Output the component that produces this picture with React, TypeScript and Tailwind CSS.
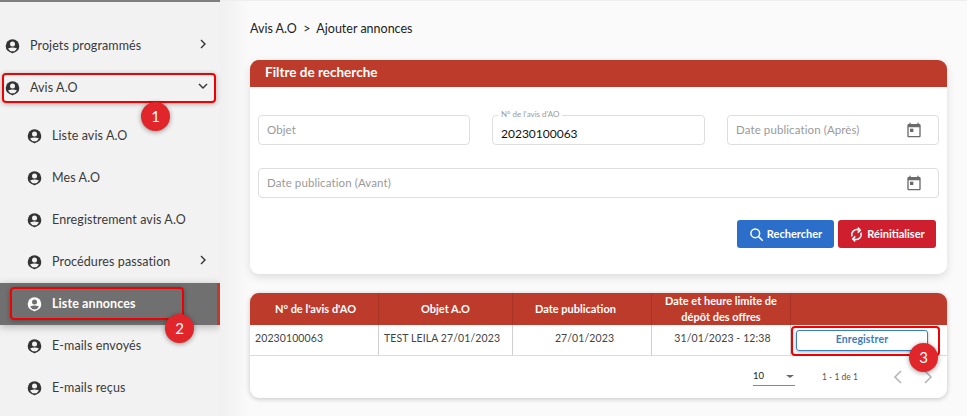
import React from "react";

const font = { fontFamily: '"Lato", "Liberation Sans", sans-serif' };

function UserIcon({ light }: { light?: boolean }) {
  const c = light ? "#ffffff" : "#333333";
  const bg = light ? "#707070" : "#f2f2f2";
  return (
    <svg width="15" height="15" viewBox="0 0 15 15" className="shrink-0">
      <circle cx="7.5" cy="7" r="6.8" fill={c} />
      <circle cx="7.5" cy="5" r="2.5" fill={bg} />
      <path d="M3 9.6 Q7.5 7.6 12 9.6 L9.8 12 Q7.5 13.4 5.2 12 Z" fill={bg} />
      <path d="M5 12.6 L7.5 14.6 L10 12.6 Z" fill={c} />
    </svg>
  );
}

function Chevron({ down }: { down?: boolean }) {
  return (
    <svg width="10" height="10" viewBox="0 0 10 10" fill="none" stroke="#333" strokeWidth="1.4" className="mb-[5px] shrink-0">
      {down ? <path d="M1 3 L5 7 L9 3" /> : <path d="M3 1 L7 5 L3 9" />}
    </svg>
  );
}

function MenuRow({ label, indent, chevron, down, active, mt }: { label: string; indent?: boolean; chevron?: boolean; down?: boolean; active?: boolean; mt?: boolean }) {
  return (
    <div
      className={`flex h-[42px] items-center pr-[12px] ${indent ? "pl-[27px]" : "pl-[5px]"} ${mt ? "mt-[6px]" : ""} ${
        active ? "border-r-[3px] border-[#c0392b] bg-[#707070] font-bold text-white shadow-[0_2px_8px_rgba(0,0,0,0.25)]" : "text-[#3a3a3a]"
      }`}
    >
      <UserIcon light={active} />
      <span className="ml-[10px] flex-1 pt-[1px] text-[12.5px] tracking-[0.1px]">{label}</span>
      {chevron && <Chevron down={down} />}
    </div>
  );
}

function Calendar() {
  return (
    <svg width="16" height="16" viewBox="0 0 24 24" fill="#6b6b6b" className="shrink-0">
      <path d="M20 3h-1V1h-2v2H7V1H5v2H4c-1.1 0-2 .9-2 2v16c0 1.1.9 2 2 2h16c1.1 0 2-.9 2-2V5c0-1.1-.9-2-2-2zm0 18H4V8h16v13z" />
      <rect x="6" y="10" width="5" height="5" />
    </svg>
  );
}

function Field({ label, className, icon, children }: { label?: string; className: string; icon?: boolean; children?: React.ReactNode }) {
  return (
    <div className={`flex h-[30px] items-center justify-between rounded-[4px] border border-[#dedede] bg-white pl-[8px] pr-[16px] text-[11.5px] tracking-[0.1px] text-[#9a9a9a] ${className}`}>
      {label && <span className="pb-[1px]">{label}</span>}
      {children}
      {icon && <Calendar />}
    </div>
  );
}

function Badge({ n, className }: { n: number; className: string }) {
  return (
    <div className={`absolute flex h-[29px] w-[29px] items-center justify-center rounded-full bg-[#e0252b] text-[15px] text-white shadow-[0_1px_5px_rgba(0,0,0,0.4)] ${className}`}>
      {n}
    </div>
  );
}

const cols = "grid grid-cols-[129px_134px_139px_139px_156px]";

export default function App() {
  return (
    <div className="relative flex h-[416px] w-[967px] overflow-hidden bg-[#fafafa]" style={font}>
      <aside className="w-[220px] shrink-0 border-t-2 border-[#7f7f7f] bg-[#f2f2f2] pt-[23px]">
        <MenuRow label="Projets programmés" chevron />
        <MenuRow label="Avis A.O" chevron down />
        <MenuRow label="Liste avis A.O" indent mt />
        <MenuRow label="Mes A.O" indent />
        <MenuRow label="Enregistrement avis A.O" indent />
        <MenuRow label="Procédures passation" indent chevron />
        <MenuRow label="Liste annonces" indent active />
        <MenuRow label="E-mails envoyés" indent />
        <MenuRow label="E-mails reçus" indent />
      </aside>

      <main className="flex-1 border-t border-[#eeeeee] bg-gradient-to-r from-[#f0f0f0] to-[#fafafa] to-[4%] pl-[30px] pr-[20px]">
        <div className="flex h-[59px] items-center pb-[3px] text-[12.5px] text-[#222]">
          Avis A.O&nbsp;&nbsp;&gt;&nbsp;&nbsp;Ajouter annonces
        </div>

        <section className="h-[214px] rounded-[9px] bg-white shadow-[0_3px_8px_rgba(0,0,0,0.12)]">
          <div className="flex h-[27px] items-center rounded-t-[9px] bg-[#bd3b2b] pb-[2px] pl-[15px] text-[13.5px] font-bold text-white">
            Filtre de recherche
          </div>
          <div className="px-[8px] pt-[28px]">
            <div className="flex gap-[22px]">
              <Field label="Objet" className="w-[212px]" />
              <div className="relative w-[213px]">
                <Field className="w-full">
                  <span className="pt-[7px] text-[12px] tracking-normal text-[#111]">20230100063</span>
                </Field>
                <span className="absolute left-[6px] top-[-6px] bg-white px-[3px] text-[8px] leading-[10px] text-[#9a9a9a]">N° de l'avis d'AO</span>
              </div>
              <Field label="Date publication (Après)" icon className="w-[212px]" />
            </div>
            <Field label="Date publication (Avant)" icon className="mt-[23px] w-[681px]" />
            <div className="mt-[22px] flex justify-end gap-[4px] pr-[3px]">
              <button className="flex h-[28px] w-[97px] items-center justify-center gap-[3px] rounded-[3px] bg-[#2b6fcb] text-[11px] font-bold text-white">
                <svg width="15" height="15" viewBox="0 0 24 24" fill="none" stroke="white" strokeWidth="2.4"><circle cx="10" cy="10" r="7" /><path d="M15 15 L22 22" /></svg>
                Rechercher
              </button>
              <button className="flex h-[28px] w-[98px] items-center justify-center gap-[3px] rounded-[3px] bg-[#cf1f2e] text-[11px] font-bold text-white">
                <svg width="15" height="15" viewBox="0 0 24 24" fill="none" stroke="white" strokeWidth="2.4"><path d="M5 15 A8 8 0 0 1 16 5" /><path d="M19 9 A8 8 0 0 1 8 19" /><path d="M14 1 L18 5 L14 9" /><path d="M10 15 L6 19 L10 23" /></svg>
                Réinitialiser
              </button>
            </div>
          </div>
        </section>

        <section className="mt-[19px] h-[105px] rounded-[9px] bg-white shadow-[0_1px_5px_rgba(0,0,0,0.22)]">
          <div className={`${cols} h-[32px] rounded-t-[9px] bg-[#bd3b2b] text-center text-[11px] font-bold leading-[16px] text-white`}>
            <div className="flex items-center justify-center border-r border-[#a93426] pl-[3px]">N° de l'avis d'AO</div>
            <div className="flex items-center justify-center border-r border-[#a93426]">Objet A.O</div>
            <div className="flex items-center justify-center border-r border-[#a93426] pr-[13px]">Date publication</div>
            <div className="flex items-center justify-center border-r border-[#a93426]">Date et heure limite de dépôt des offres</div>
            <div />
          </div>
          <div className={`${cols} h-[31px] border-b border-[#dcdcdc] text-[10.5px] tracking-[0.1px] text-[#444]`}>
            <div className="flex items-center border-r border-[#cfcfcf] pb-[2px] pl-[5px]">20230100063</div>
            <div className="flex items-center whitespace-nowrap border-r border-[#cfcfcf] pb-[2px] pl-[5px]">TEST LEILA 27/01/2023</div>
            <div className="flex items-center justify-center border-r border-[#cfcfcf] pb-[2px] pl-[5px]">27/01/2023</div>
            <div className="flex items-center justify-center border-r border-[#cfcfcf] pb-[2px] pl-[3px]">31/01/2023 - 12:38</div>
            <div className="flex items-center pl-[5px]">
              <button className="h-[21px] w-[132px] rounded-[3px] border border-[#3b7dbd] text-[10.5px] font-bold text-[#3b7dbd] shadow-[0_1px_3px_rgba(0,0,0,0.3)]">Enregistrer</button>
            </div>
          </div>
          <div className="flex h-[42px] items-center pl-[503px] text-[8.5px] text-[#555]">
            <div className="flex h-[18px] w-[42px] items-center justify-between border-b border-[#888] text-[9.5px] text-[#222]">
              <span>10</span>
              <span className="mr-[1px] h-0 w-0 border-x-[4px] border-t-[3px] border-x-transparent border-t-[#666]" />
            </div>
            <span className="ml-[27px]">1 - 1 de 1</span>
            <svg width="10" height="14" viewBox="0 0 10 14" fill="none" stroke="#b5b5b5" strokeWidth="1.6" className="ml-[35px]"><path d="M8 1 L2 7 L8 13" /></svg>
            <svg width="10" height="14" viewBox="0 0 10 14" fill="none" stroke="#b5b5b5" strokeWidth="1.6" className="ml-[20px]"><path d="M2 1 L8 7 L2 13" /></svg>
          </div>
        </section>
      </main>

      <div className="absolute left-[2px] top-[73px] h-[30px] w-[214px] rounded-[4px] border-2 border-[#f00000] shadow-[0_1px_5px_rgba(0,0,0,0.3)]" />
      <Badge n={1} className="left-[141px] top-[102px]" />
      <div className="absolute left-[10px] top-[287px] h-[33px] w-[174px] rounded-[4px] border-2 border-[#f00000] shadow-[0_1px_5px_rgba(0,0,0,0.3)]" />
      <Badge n={2} className="left-[165px] top-[314px]" />
      <div className="absolute left-[791px] top-[326px] h-[30px] w-[149px] rounded-[4px] border-2 border-[#f00000]" />
      <Badge n={3} className="left-[909px] top-[343px]" />
    </div>
  );
}
